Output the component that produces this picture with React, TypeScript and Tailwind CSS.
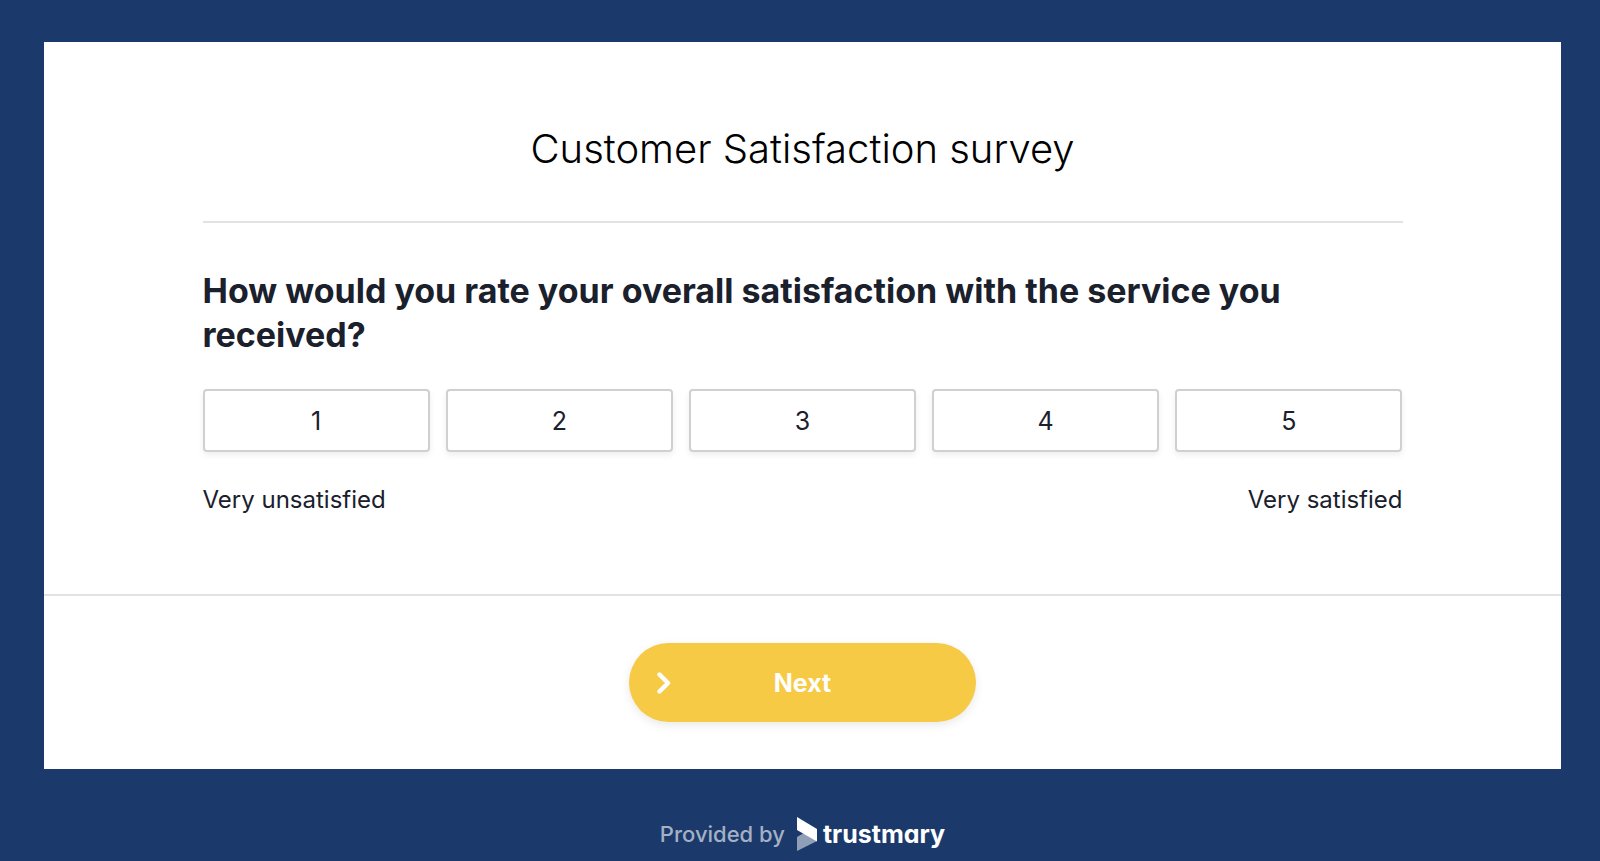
import { useState } from "react";

const scores = [1, 2, 3, 4, 5];

function ScoreOption({ value, selected, onSelect }: { value: number; selected: boolean; onSelect: () => void }) {
  return (
    <button
      type="button"
      aria-pressed={selected}
      onClick={onSelect}
      className={
        "flex h-[63px] items-center justify-center rounded-[4px] border-2 bg-white text-[25px] leading-8 shadow-[0_3px_6px_rgba(0,0,0,0.07)] " +
        (selected ? "border-[#f7ca45]" : "border-[#d0d0d0]")
      }
    >
      {value}
    </button>
  );
}

function TrustmaryMark() {
  return (
    <svg viewBox="0 0 20 34" className="h-[34px] w-5" aria-hidden="true">
      <path d="M0 34V20L9.500 14.500L20 24Z" fill="#8f9fb8" />
      <path d="M0 0L20 12V24.500L0 13Z" fill="#fff" />
    </svg>
  );
}

export default function App() {
  const [score, setScore] = useState<number | null>(null);

  return (
    <div className="flex min-h-screen flex-col bg-[#1b3a6b] pt-[42px] pr-[39px] pl-11 font-['Inter','Liberation_Sans',sans-serif] text-[#1a202c]">
      <main className="bg-white">
        <div className="mx-auto max-w-[1200px] pb-[78px]">
          <h1 className="border-b-2 border-[#e2e2e2] pt-[79px] pb-[44px] text-center text-[40px] leading-14 font-light text-black">
            Customer Satisfaction survey
          </h1>
          <h2 className="mt-[46px] text-[34px] leading-[44px] font-bold">
            How would you rate your overall satisfaction with the service you received?
          </h2>
          <div className="mt-8 grid grid-cols-5 gap-4">
            {scores.map((value) => (
              <ScoreOption key={value} value={value} selected={score === value} onSelect={() => setScore(value)} />
            ))}
          </div>
          <div className="mt-8 flex justify-between text-[24px] leading-8">
            <span>Very unsatisfied</span>
            <span>Very satisfied</span>
          </div>
        </div>
        <div className="flex justify-center border-t-2 border-[#e2e2e2] py-[47px]">
          <button
            type="button"
            className="grid h-[79px] w-[347px] grid-cols-[1fr_auto_1fr] items-center rounded-full bg-[#f7ca45] px-7 text-[25px] leading-8 font-bold text-white shadow-[0_3px_10px_rgba(0,0,0,0.09)]"
          >
            <svg viewBox="0 0 14 22" className="h-[22px] w-[14px]" aria-hidden="true">
              <path d="M2.500 2.500L11 11L2.500 19.500" fill="none" stroke="currentColor" strokeWidth="4.400" strokeLinecap="round" strokeLinejoin="round" />
            </svg>
            <span>Next</span>
          </button>
        </div>
      </main>
      <footer className="flex items-center justify-center pt-12">
        <span className="text-[22px] leading-8 font-medium text-[#a4b0c4]">Provided by</span>
        <a href="#trustmary" className="ml-3 flex items-center gap-1.5 text-white">
          <TrustmaryMark />
          <span className="text-[25px] leading-8 font-bold [font-feature-settings:'cv11']">trustmary</span>
        </a>
      </footer>
    </div>
  );
}
